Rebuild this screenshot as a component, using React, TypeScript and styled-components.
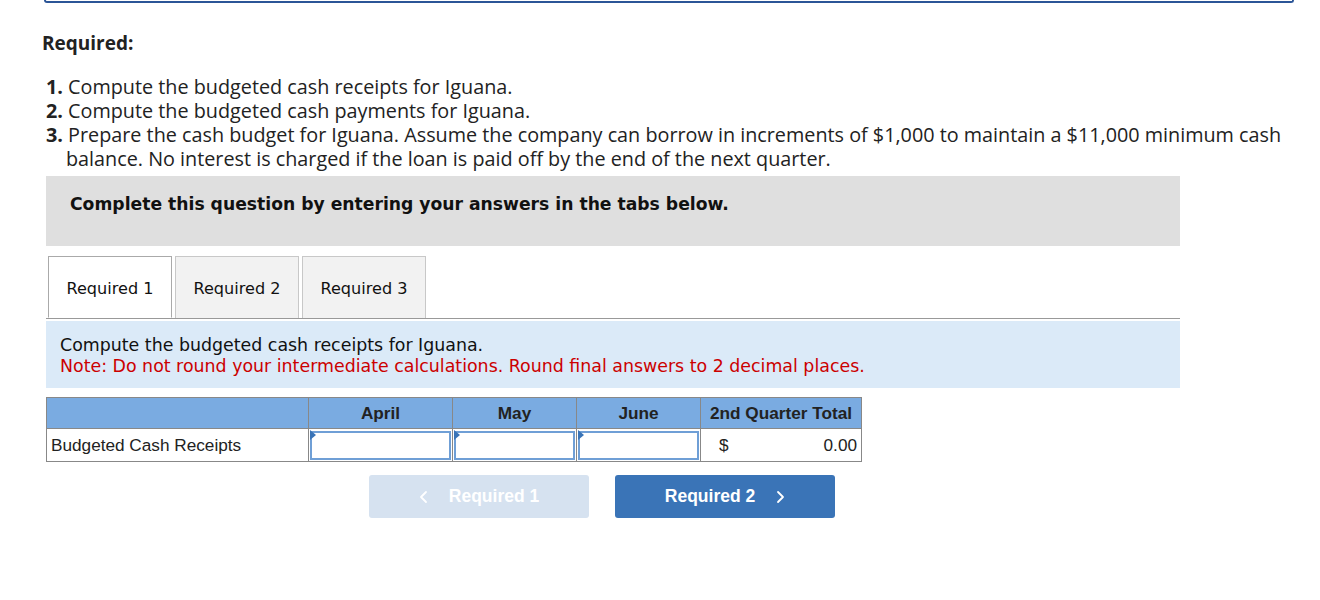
import React from "react";
import styled, { createGlobalStyle } from "styled-components";

const Global = createGlobalStyle`
  body {
    margin: 0;
    background: #fff;
    font-family: "Open Sans", Arial, sans-serif;
    color: #222;
  }
`;

const Page = styled.div`
  width: 1320px;
  height: 600px;
  overflow: hidden;
  padding: 0 0 0 42px;
  box-sizing: border-box;
`;

const TopFrame = styled.div`
  width: 1250px;
  height: 3px;
  margin-left: 2px;
  border: 2px solid #2b5597;
  border-top: 0;
  border-radius: 0 0 5px 5px;
  box-sizing: border-box;
`;

const Heading = styled.div`
  font-family: "Open Sans", sans-serif;
  font-weight: 700;
  font-size: 19px;
  margin-top: 28px;
  line-height: 24px;
`;

const List = styled.ol`
  list-style: none;
  width: 1250px;
  margin: 20px 0 0 0;
  padding: 0;
  font-family: "Open Sans", sans-serif;
  font-size: 19.8px;
  line-height: 24px;
  color: #222;
`;

const Item = styled.li`
  padding-left: 24px;
  text-indent: -20px;
  b {
    font-weight: 700;
  }
`;

const Prompt = styled.div`
  width: 1134px;
  height: 70px;
  margin: 5px 0 0 4px;
  background: #dfdfdf;
  padding: 18px 0 0 24px;
  box-sizing: border-box;
  font-family: "DejaVu Sans", Verdana, sans-serif;
  font-weight: 700;
  font-size: 17.2px;
  color: #111;
`;

const Tabs = styled.div`
  display: flex;
  gap: 3px;
  width: 1134px;
  margin: 10px 0 0 4px;
  padding-left: 2px;
  box-sizing: border-box;
  border-bottom: 1px solid #999;
`;

const Tab = styled.div<{ active?: boolean }>`
  width: 124px;
  height: 62px;
  box-sizing: border-box;
  display: flex;
  align-items: center;
  justify-content: center;
  padding-top: 2px;
  border: 1px solid ${(p) => (p.active ? "#aaa" : "#c8c8c8")};
  border-bottom: ${(p) => (p.active ? "1px solid #fff" : "0")};
  margin-bottom: ${(p) => (p.active ? "-1px" : "0")};
  background: ${(p) => (p.active ? "#fff" : "#f2f2f2")};
  font-family: "DejaVu Sans", Verdana, sans-serif;
  font-size: 16.1px;
  color: #111;
`;

const Panel = styled.div`
  width: 1134px;
  height: 67px;
  margin: 2px 0 0 4px;
  background: #dbeaf8;
  padding: 14px 0 0 14px;
  box-sizing: border-box;
  font-family: "DejaVu Sans", Verdana, sans-serif;
  font-size: 17.4px;
  line-height: 21px;
  color: #111;
`;

const Note = styled.div`
  color: #c00;
`;

const Table = styled.table`
  border-collapse: collapse;
  margin: 9px 0 0 4px;
  font-family: "Liberation Sans", Arial, sans-serif;
  font-size: 17.2px;
  color: #222;
`;

const Head = styled.th<{ w: number }>`
  width: ${(p) => p.w}px;
  height: 31px;
  padding: 0;
  background: #7aabe1;
  border: 1px solid #888;
  font-weight: 700;
  text-align: center;
  box-sizing: border-box;
`;

const Label = styled.td`
  height: 32px;
  padding: 0 4px;
  border: 1px solid #888;
  text-align: left;
`;

const InputCell = styled.td`
  padding: 1px;
  border: 1px solid #888;
  position: relative;
`;

const Field = styled.div`
  height: 29px;
  border: 2px solid #6f9fd6;
  background: #fff;
  box-sizing: border-box;
`;

const Flag = styled.span`
  position: absolute;
  left: 1px;
  top: 1px;
  width: 0;
  height: 0;
  border-top: 5px solid transparent;
  border-bottom: 5px solid transparent;
  border-left: 6px solid #3a74b7;
`;

const TotalCell = styled.td`
  border: 1px solid #888;
  padding: 0 4px 0 18px;
`;

const TotalInner = styled.div`
  display: flex;
  justify-content: space-between;
`;

const Nav = styled.div`
  display: flex;
  gap: 26px;
  margin: 13px 0 0 327px;
`;

const NavButton = styled.button<{ disabled?: boolean }>`
  width: 220px;
  height: 43px;
  border: 0;
  border-radius: 3px;
  background: ${(p) => (p.disabled ? "#d6e2f0" : "#3a74b7")};
  color: #fff;
  font-family: "Liberation Sans", Arial, sans-serif;
  font-weight: 700;
  font-size: 17.5px;
  display: flex;
  align-items: center;
  justify-content: center;
  gap: 20px;
  cursor: pointer;
`;

const Chevron = ({ dir }: { dir: "left" | "right" }) => (
  <svg width="10" height="14" viewBox="0 0 10 14" fill="none">
    <path
      d={dir === "left" ? "M7 2 L2 7 L7 12" : "M3 2 L8 7 L3 12"}
      stroke="#fff"
      strokeWidth="1.8"
      strokeLinecap="round"
      strokeLinejoin="round"
    />
  </svg>
);

const Input = () => (
  <InputCell>
    <Flag />
    <Field />
  </InputCell>
);

export default function App() {
  return (
    <>
      <Global />
      <Page>
        <TopFrame />
        <Heading>Required:</Heading>
        <List>
          <Item>
            <b>1.</b> Compute the budgeted cash receipts for Iguana.
          </Item>
          <Item>
            <b>2.</b> Compute the budgeted cash payments for Iguana.
          </Item>
          <Item>
            <b>3.</b> Prepare the cash budget for Iguana. Assume the company can borrow in
            increments of $1,000 to maintain a $11,000 minimum cash balance. No interest is
            charged if the loan is paid off by the end of the next quarter.
          </Item>
        </List>
        <Prompt>Complete this question by entering your answers in the tabs below.</Prompt>
        <Tabs>
          <Tab active>Required 1</Tab>
          <Tab>Required 2</Tab>
          <Tab>Required 3</Tab>
        </Tabs>
        <Panel>
          <div>Compute the budgeted cash receipts for Iguana.</div>
          <Note>
            Note: Do not round your intermediate calculations. Round final answers to 2
            decimal places.
          </Note>
        </Panel>
        <Table>
          <thead>
            <tr>
              <Head w={262} />
              <Head w={144}>April</Head>
              <Head w={124}>May</Head>
              <Head w={124}>June</Head>
              <Head w={161}>2nd Quarter Total</Head>
            </tr>
          </thead>
          <tbody>
            <tr>
              <Label>Budgeted Cash Receipts</Label>
              <Input />
              <Input />
              <Input />
              <TotalCell>
                <TotalInner>
                  <span>$</span>
                  <span>0.00</span>
                </TotalInner>
              </TotalCell>
            </tr>
          </tbody>
        </Table>
        <Nav>
          <NavButton disabled>
            <Chevron dir="left" />
            Required 1
          </NavButton>
          <NavButton>
            Required 2
            <Chevron dir="right" />
          </NavButton>
        </Nav>
      </Page>
    </>
  );
}
